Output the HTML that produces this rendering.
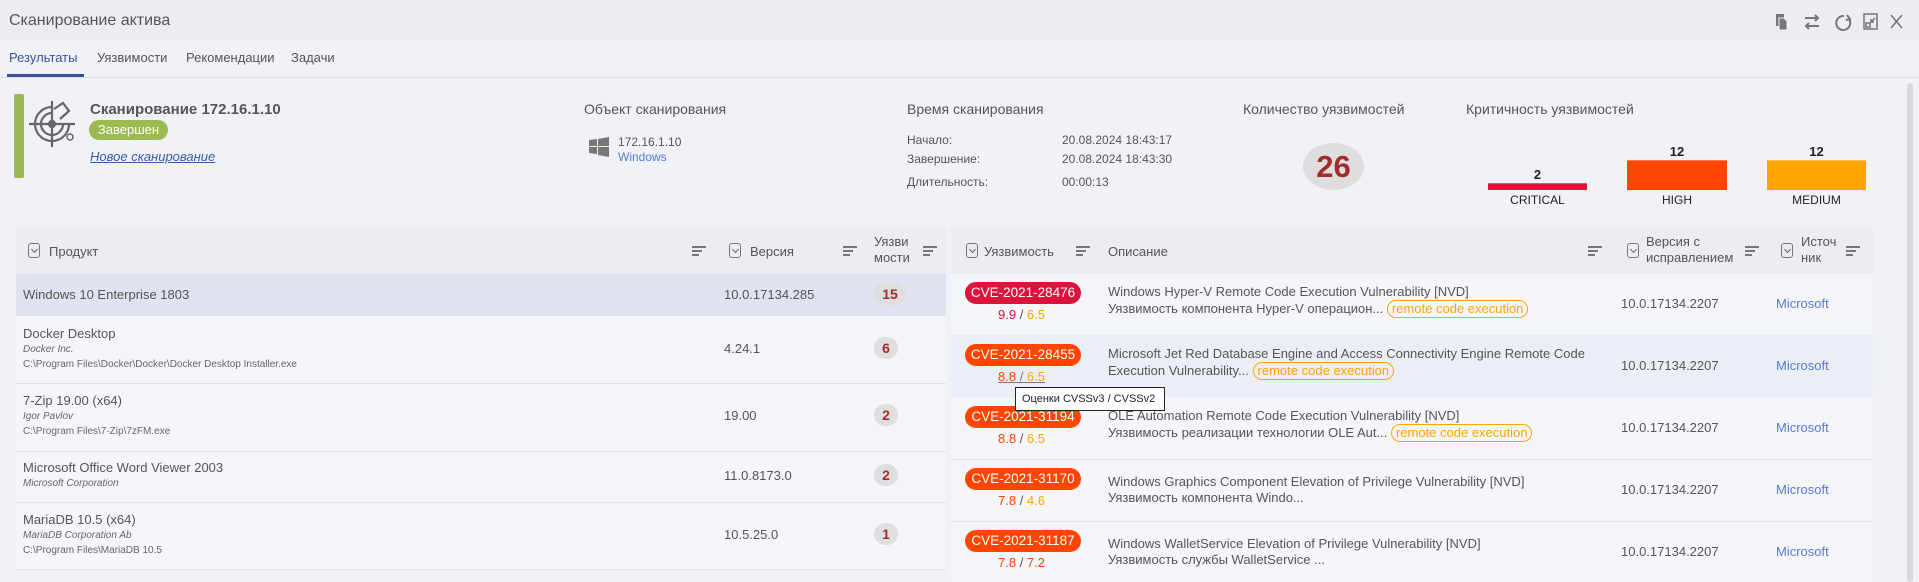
<!DOCTYPE html>
<html><head><meta charset="utf-8"><style>
*{margin:0;padding:0;box-sizing:border-box}
body{width:1919px;height:582px;overflow:hidden;background:#f1f2f7;font-family:"Liberation Sans","DejaVu Sans",sans-serif;color:#555;position:relative;font-size:13px}
.a{position:absolute;white-space:nowrap}
.hd{background:#ecedf2}
.cb{position:absolute;width:12px;height:15px;border:1px solid #777;border-radius:3px}
.cb:after{content:"";position:absolute;left:3px;top:3px;width:4px;height:4px;border-right:1px solid #666;border-bottom:1px solid #666;transform:rotate(45deg)}
.so{position:absolute;width:14px;height:11px}
.so i{position:absolute;left:0;height:2px;background:#777}
.cnt{position:absolute;height:22px;border-radius:11px;background:#e0dfe0;color:#a52a2a;font-weight:bold;font-size:14px;text-align:center;line-height:22px}
.cve{position:absolute;left:965px;width:116px;height:22px;border-radius:11px;color:#fff;font-size:13.5px;text-align:center;line-height:22px}
.rce{display:inline-block;border:1px solid #ffa500;color:#ffa500;border-radius:10px;padding:0 4px;line-height:16px}
.sm{font-size:10px;font-style:italic;color:#666}
.pt{font-size:10px;color:#666}
</style></head><body>
<div class="a hd" style="left:0;top:0;width:1919px;height:40px"></div>
<div class="a" style="left:9px;top:12px;font-size:16px;color:#555">Сканирование актива</div>
<svg class="a" style="left:1770px;top:10px" width="140" height="24" viewBox="0 0 140 24" fill="none" stroke="#777" stroke-width="2">
<rect x="6" y="4" width="8" height="12" fill="#777" stroke="none"/><path d="M9 8h5l3 3v9H9z" fill="#777" stroke="#f0f1f5" stroke-width="1"/>
<path d="M35 8h13M45 5l3 3-3 3M49 16H36M39 13l-3 3 3 3"/>
<path d="M74 6a7 7 0 1 0 5 3" /><path d="M77 5l3 4-4 1" />
<rect x="94" y="4" width="13" height="15" stroke-width="1.5"/><path d="M96 13h4v4h-4zM101 12l4-4M101 9v3h3" stroke-width="1.5"/>
<path d="M121 5l11 13M132 5l-11 13" stroke-width="1.6"/>
</svg>
<div class="a" style="left:0;top:40px;width:1919px;height:38px;border-bottom:1px solid #dcdde5"></div>
<div class="a" style="left:9px;top:50px;color:#3a4fa0">Результаты</div>
<div class="a" style="left:7px;top:74px;width:77px;height:3px;background:#3a4fa0"></div>
<div class="a" style="left:97px;top:50px">Уязвимости</div>
<div class="a" style="left:186px;top:50px">Рекомендации</div>
<div class="a" style="left:291px;top:50px">Задачи</div>

<div class="a" style="left:14px;top:94px;width:10px;height:84px;background:#9bbb50;border-radius:2px"></div>
<svg class="a" style="left:27px;top:99px" width="52" height="50" viewBox="0 0 52 50" fill="none" stroke="#666" stroke-width="2.2">
<path d="M25 8a17 17 0 1 0 17 17"/><path d="M25 14a11 11 0 1 0 11 11"/><path d="M25 2v46M2 25h46"/><circle cx="25" cy="25" r="3" fill="#666"/><path d="M27 10l9-6 6 8-9 8"/><circle cx="43" cy="38" r="3" stroke-width="1.5"/></svg>
<div class="a" style="left:90px;top:101px;font-size:15px;font-weight:bold;color:#555">Сканирование 172.16.1.10</div>
<div class="a" style="left:89px;top:120px;width:79px;height:20px;border-radius:10px;background:#9bbb50;color:#fff;font-size:13px;text-align:center;line-height:20px">Завершен</div>
<div class="a" style="left:90px;top:149px;font-style:italic;text-decoration:underline;color:#3a5aa8">Новое сканирование</div>

<div class="a" style="left:584px;top:101px;font-size:14px">Объект сканирования</div>
<svg class="a" style="left:589px;top:137px" width="20" height="20" viewBox="0 0 20 20" fill="#777"><path d="M0 3l8-1v7H0zM9 2l11-2v9H9zM0 10h8v7l-8-1zM9 10h11v10l-11-2z"/></svg>
<div class="a" style="left:618px;top:135px;font-size:12px">172.16.1.10</div>
<div class="a" style="left:618px;top:150px;font-size:12px;color:#5a78d8">Windows</div>

<div class="a" style="left:907px;top:101px;font-size:14px">Время сканирования</div>
<div class="a" style="left:907px;top:133px;font-size:12px">Начало:</div>
<div class="a" style="left:907px;top:152px;font-size:12px">Завершение:</div>
<div class="a" style="left:907px;top:175px;font-size:12px">Длительность:</div>
<div class="a" style="left:1062px;top:133px;font-size:12px">20.08.2024 18:43:17</div>
<div class="a" style="left:1062px;top:152px;font-size:12px">20.08.2024 18:43:30</div>
<div class="a" style="left:1062px;top:175px;font-size:12px">00:00:13</div>

<div class="a" style="left:1243px;top:101px;font-size:14px">Количество уязвимостей</div>
<div class="a" style="left:1303px;top:143px;width:61px;height:47px;border-radius:50%;background:#dedede;color:#a52a2a;font-weight:bold;font-size:31px;text-align:center;line-height:47px">26</div>

<div class="a" style="left:1466px;top:101px;font-size:14px">Критичность уязвимостей</div>
<div class="a" style="left:1488px;top:167px;width:99px;text-align:center;font-weight:bold;color:#222">2</div>
<div class="a" style="left:1488px;top:183px;width:99px;height:7px;background:#dc143c;border-top:1px solid #e85070"></div>
<div class="a" style="left:1488px;top:193px;width:99px;text-align:center;font-size:12px;color:#222">CRITICAL</div>
<div class="a" style="left:1627px;top:144px;width:100px;text-align:center;font-weight:bold;color:#222">12</div>
<div class="a" style="left:1627px;top:160px;width:100px;height:30px;background:#ff4500;border-top:1px solid #ff7a50"></div>
<div class="a" style="left:1627px;top:193px;width:100px;text-align:center;font-size:12px;color:#222">HIGH</div>
<div class="a" style="left:1767px;top:144px;width:99px;text-align:center;font-weight:bold;color:#222">12</div>
<div class="a" style="left:1767px;top:160px;width:99px;height:30px;background:#ffa500;border-top:1px solid #ffc050"></div>
<div class="a" style="left:1767px;top:193px;width:99px;text-align:center;font-size:12px;color:#222">MEDIUM</div>

<div class="a" style="left:1907px;top:83px;width:6px;height:499px;background:#d8d9de;border-radius:3px"></div>

<!-- left table -->
<div class="a hd" style="left:16px;top:228px;width:930px;height:46px"></div>
<div class="cb" style="left:28px;top:243px"></div><div class="a" style="left:49px;top:244px">Продукт</div>
<div class="so" style="left:692px;top:246px"><i style="top:0;width:14px"></i><i style="top:4px;width:10px"></i><i style="top:8px;width:7px"></i></div>
<div class="cb" style="left:729px;top:243px"></div><div class="a" style="left:750px;top:244px">Версия</div>
<div class="so" style="left:843px;top:246px"><i style="top:0;width:14px"></i><i style="top:4px;width:10px"></i><i style="top:8px;width:7px"></i></div>
<div class="a" style="left:874px;top:234px;line-height:16px">Уязви<br>мости</div>
<div class="so" style="left:923px;top:246px"><i style="top:0;width:14px"></i><i style="top:4px;width:10px"></i><i style="top:8px;width:7px"></i></div>

<div class="a" style="left:16px;top:274px;width:930px;height:42px;background:#e1e3f0"></div>
<div class="a" style="left:16px;top:316px;width:930px;height:253px;background:#f5f6fa"></div>
<div class="a" style="left:16px;top:383px;width:930px;height:1px;background:#e3e4ea"></div>
<div class="a" style="left:16px;top:451px;width:930px;height:1px;background:#e3e4ea"></div>
<div class="a" style="left:16px;top:502px;width:930px;height:1px;background:#e3e4ea"></div>
<div class="a" style="left:16px;top:569px;width:930px;height:1px;background:#e3e4ea"></div>

<div class="a" style="left:23px;top:287px">Windows 10 Enterprise 1803</div>
<div class="a" style="left:724px;top:287px">10.0.17134.285</div>
<div class="cnt" style="left:874px;top:283px;width:32px">15</div>

<div class="a" style="left:23px;top:326px">Docker Desktop</div>
<div class="a sm" style="left:23px;top:344px">Docker Inc.</div>
<div class="a pt" style="left:23px;top:359px">C:\Program Files\Docker\Docker\Docker Desktop Installer.exe</div>
<div class="a" style="left:724px;top:341px">4.24.1</div>
<div class="cnt" style="left:874px;top:337px;width:24px">6</div>

<div class="a" style="left:23px;top:393px">7-Zip 19.00 (x64)</div>
<div class="a sm" style="left:23px;top:411px">Igor Pavlov</div>
<div class="a pt" style="left:23px;top:426px">C:\Program Files\7-Zip\7zFM.exe</div>
<div class="a" style="left:724px;top:408px">19.00</div>
<div class="cnt" style="left:874px;top:404px;width:24px">2</div>

<div class="a" style="left:23px;top:460px">Microsoft Office Word Viewer 2003</div>
<div class="a sm" style="left:23px;top:478px">Microsoft Corporation</div>
<div class="a" style="left:724px;top:468px">11.0.8173.0</div>
<div class="cnt" style="left:874px;top:464px;width:24px">2</div>

<div class="a" style="left:23px;top:512px">MariaDB 10.5 (x64)</div>
<div class="a sm" style="left:23px;top:530px">MariaDB Corporation Ab</div>
<div class="a pt" style="left:23px;top:545px">C:\Program Files\MariaDB 10.5</div>
<div class="a" style="left:724px;top:527px">10.5.25.0</div>
<div class="cnt" style="left:874px;top:523px;width:24px">1</div>

<!-- right table -->
<div class="a hd" style="left:951px;top:228px;width:922px;height:46px"></div>
<div class="cb" style="left:966px;top:243px"></div><div class="a" style="left:984px;top:244px">Уязвимость</div>
<div class="so" style="left:1076px;top:246px"><i style="top:0;width:14px"></i><i style="top:4px;width:10px"></i><i style="top:8px;width:7px"></i></div>
<div class="a" style="left:1108px;top:244px">Описание</div>
<div class="so" style="left:1588px;top:246px"><i style="top:0;width:14px"></i><i style="top:4px;width:10px"></i><i style="top:8px;width:7px"></i></div>
<div class="cb" style="left:1627px;top:243px"></div><div class="a" style="left:1646px;top:234px;line-height:16px">Версия с<br>исправлением</div>
<div class="so" style="left:1745px;top:246px"><i style="top:0;width:14px"></i><i style="top:4px;width:10px"></i><i style="top:8px;width:7px"></i></div>
<div class="cb" style="left:1781px;top:243px"></div><div class="a" style="left:1801px;top:234px;line-height:16px">Источ<br>ник</div>
<div class="so" style="left:1846px;top:246px"><i style="top:0;width:14px"></i><i style="top:4px;width:10px"></i><i style="top:8px;width:7px"></i></div>

<div class="a" style="left:951px;top:274px;width:922px;height:308px;background:#f5f6fa"></div>
<div class="a" style="left:951px;top:335px;width:922px;height:63px;background:#eceef5"></div>
<div class="a" style="left:951px;top:459px;width:922px;height:1px;background:#e3e4ea"></div>
<div class="a" style="left:951px;top:521px;width:922px;height:1px;background:#e3e4ea"></div>

<div class="cve" style="top:282px;background:#dc143c">CVE-2021-28476</div>
<div class="a" style="left:998px;top:307px"><span style="color:#dc143c">9.9</span> / <span style="color:#ffa500">6.5</span></div>
<div class="a" style="left:1108px;top:284px">Windows Hyper-V Remote Code Execution Vulnerability [NVD]</div>
<div class="a" style="left:1108px;top:300px">Уязвимость компонента Hyper-V операцион... <span class="rce">remote code execution</span></div>
<div class="a" style="left:1621px;top:296px">10.0.17134.2207</div>
<div class="a" style="left:1776px;top:296px;color:#5a78d8">Microsoft</div>

<div class="cve" style="top:344px;background:#ff4500">CVE-2021-28455</div>
<div class="a" style="left:998px;top:369px;text-decoration:underline;color:#777"><span style="color:#ff4500">8.8</span> / <span style="color:#ffa500">6.5</span></div>
<div class="a" style="left:1108px;top:346px">Microsoft Jet Red Database Engine and Access Connectivity Engine Remote Code</div>
<div class="a" style="left:1108px;top:362px">Execution Vulnerability... <span class="rce">remote code execution</span></div>
<div class="a" style="left:1621px;top:358px">10.0.17134.2207</div>
<div class="a" style="left:1776px;top:358px;color:#5a78d8">Microsoft</div>

<div class="cve" style="top:406px;background:#ff4500">CVE-2021-31194</div>
<div class="a" style="left:998px;top:431px"><span style="color:#ff4500">8.8</span> / <span style="color:#ffa500">6.5</span></div>
<div class="a" style="left:1108px;top:408px">OLE Automation Remote Code Execution Vulnerability [NVD]</div>
<div class="a" style="left:1108px;top:424px">Уязвимость реализации технологии OLE Aut... <span class="rce">remote code execution</span></div>
<div class="a" style="left:1621px;top:420px">10.0.17134.2207</div>
<div class="a" style="left:1776px;top:420px;color:#5a78d8">Microsoft</div>

<div class="cve" style="top:468px;background:#ff4500">CVE-2021-31170</div>
<div class="a" style="left:998px;top:493px"><span style="color:#ff4500">7.8</span> / <span style="color:#ffa500">4.6</span></div>
<div class="a" style="left:1108px;top:474px">Windows Graphics Component Elevation of Privilege Vulnerability [NVD]</div>
<div class="a" style="left:1108px;top:490px">Уязвимость компонента Windo...</div>
<div class="a" style="left:1621px;top:482px">10.0.17134.2207</div>
<div class="a" style="left:1776px;top:482px;color:#5a78d8">Microsoft</div>

<div class="cve" style="top:530px;background:#ff4500">CVE-2021-31187</div>
<div class="a" style="left:998px;top:555px"><span style="color:#ff4500">7.8</span> / <span style="color:#ff4500">7.2</span></div>
<div class="a" style="left:1108px;top:536px">Windows WalletService Elevation of Privilege Vulnerability [NVD]</div>
<div class="a" style="left:1108px;top:552px">Уязвимость службы WalletService ...</div>
<div class="a" style="left:1621px;top:544px">10.0.17134.2207</div>
<div class="a" style="left:1776px;top:544px;color:#5a78d8">Microsoft</div>

<div class="a" style="left:1015px;top:387px;width:150px;height:24px;background:#fff;border:1px solid #222;font-size:11px;color:#222;line-height:22px;padding-left:6px">Оценки CVSSv3 / CVSSv2</div>
</body></html>
